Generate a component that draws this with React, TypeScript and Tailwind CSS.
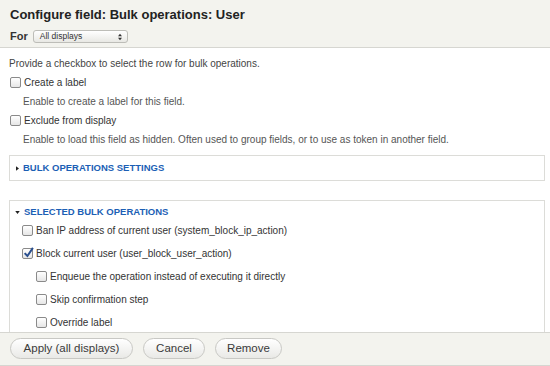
import React from "react";

const font = { fontFamily: '"Liberation Sans", Arial, sans-serif' };

function Box({ checked = false }: { checked?: boolean }) {
  return (
    <span className="relative inline-block w-[11px] h-[11px] rounded-[2px] border border-[#8a8a8a] bg-gradient-to-b from-white to-[#e6e6e6] shrink-0">
      {checked && (
        <svg viewBox="0 0 10 10" className="absolute left-[0px] top-[-2px] w-[11px] h-[11px]">
          <path d="M1.5 5.5 L4 8.2 L9 0.8" fill="none" stroke="#2a4f8f" strokeWidth="1.8" />
        </svg>
      )}
    </span>
  );
}

function Check({ label, checked, className = "" }: { label: string; checked?: boolean; className?: string }) {
  return (
    <div className={"flex items-center gap-[3px] " + className}>
      <Box checked={checked} />
      <span className="text-[10px] text-[#333]">{label}</span>
    </div>
  );
}

function Btn({ children, w }: { children: React.ReactNode; w: string }) {
  return (
    <button
      className={
        "h-[21px] rounded-full border border-[#c8c8c4] bg-gradient-to-b from-white to-[#e9e9e6] text-[11.5px] text-[#3a3a3a] flex items-center justify-center " +
        w
      }
    >
      {children}
    </button>
  );
}

export default function App() {
  return (
    <div style={font} className="w-[550px] h-[366px] bg-white flex flex-col overflow-hidden">
      <div className="h-[48px] bg-[#f3f3ee] border-b border-[#d6d6d1] pl-[10px] flex flex-col shrink-0">
        <div className="text-[13px] font-bold text-[#222] h-[28px] flex items-center pt-[1px]">
          Configure field: Bulk operations: User
        </div>
        <div className="flex items-center gap-[5px]">
          <span className="text-[11px] font-bold text-[#333]">For</span>
          <div className="relative w-[95px] h-[13px] rounded-[3px] border border-[#bdbdb8] bg-gradient-to-b from-white to-[#e8e8e4] flex items-center pl-[6px]">
            <span className="text-[8.5px] text-[#333] leading-none">All displays</span>
            <svg viewBox="0 0 6 10" className="absolute right-[5px] top-[2px] w-[4px] h-[8px]">
              <path d="M0 4 L3 0 L6 4 Z M0 6 L3 10 L6 6 Z" fill="#333" />
            </svg>
          </div>
        </div>
      </div>

      <div className="h-[284px] overflow-hidden pl-[9px] pr-[5px] pt-[6px] shrink-0">
        <div className="h-[19px] flex items-center text-[10px] text-[#444]">
          Provide a checkbox to select the row for bulk operations.
        </div>
        <Check label="Create a label" className="h-[19px] pl-[1px]" />
        <div className="h-[19px] flex items-center pl-[14px] text-[10px] text-[#555]">
          Enable to create a label for this field.
        </div>
        <Check label="Exclude from display" className="h-[19px] pl-[1px]" />
        <div className="h-[19px] flex items-center pl-[14px] text-[10px] text-[#555]">
          Enable to load this field as hidden. Often used to group fields, or to use as token in another field.
        </div>

        <div className="mt-[6px] h-[26px] border border-[#dcdcd8] flex items-center pl-[6px] gap-[4px]">
          <svg viewBox="0 0 4 6" className="w-[3px] h-[5px]">
            <path d="M0 0 L4 3 L0 6 Z" fill="#222" />
          </svg>
          <span className="text-[9.5px] font-bold text-[#1c5fb5]">BULK OPERATIONS SETTINGS</span>
        </div>

        <div className="mt-[19px] border border-[#dcdcd8] h-[200px] pt-[4px]">
          <div className="h-[14px] flex items-center pl-[5px] gap-[4px]">
            <svg viewBox="0 0 6 4" className="w-[5px] h-[3px]">
              <path d="M0 0 L6 0 L3 4 Z" fill="#222" />
            </svg>
            <span className="text-[9.5px] font-bold text-[#1c5fb5]">SELECTED BULK OPERATIONS</span>
          </div>
          <Check label="Ban IP address of current user (system_block_ip_action)" className="h-[23px] pl-[12px]" />
          <Check label="Block current user (user_block_user_action)" checked className="h-[23px] pl-[12px]" />
          <Check label="Enqueue the operation instead of executing it directly" className="h-[23px] pl-[26px]" />
          <Check label="Skip confirmation step" className="h-[23px] pl-[26px]" />
          <Check label="Override label" className="h-[23px] pl-[26px]" />
        </div>
      </div>

      <div className="flex-1 bg-[#f3f3ee] border-t border-[#d6d6d1] border-b flex items-center gap-[10px] pl-[10px] pb-[1px]">
        <Btn w="w-[123px]">Apply (all displays)</Btn>
        <Btn w="w-[62px]">Cancel</Btn>
        <Btn w="w-[67px]">Remove</Btn>
      </div>
    </div>
  );
}
